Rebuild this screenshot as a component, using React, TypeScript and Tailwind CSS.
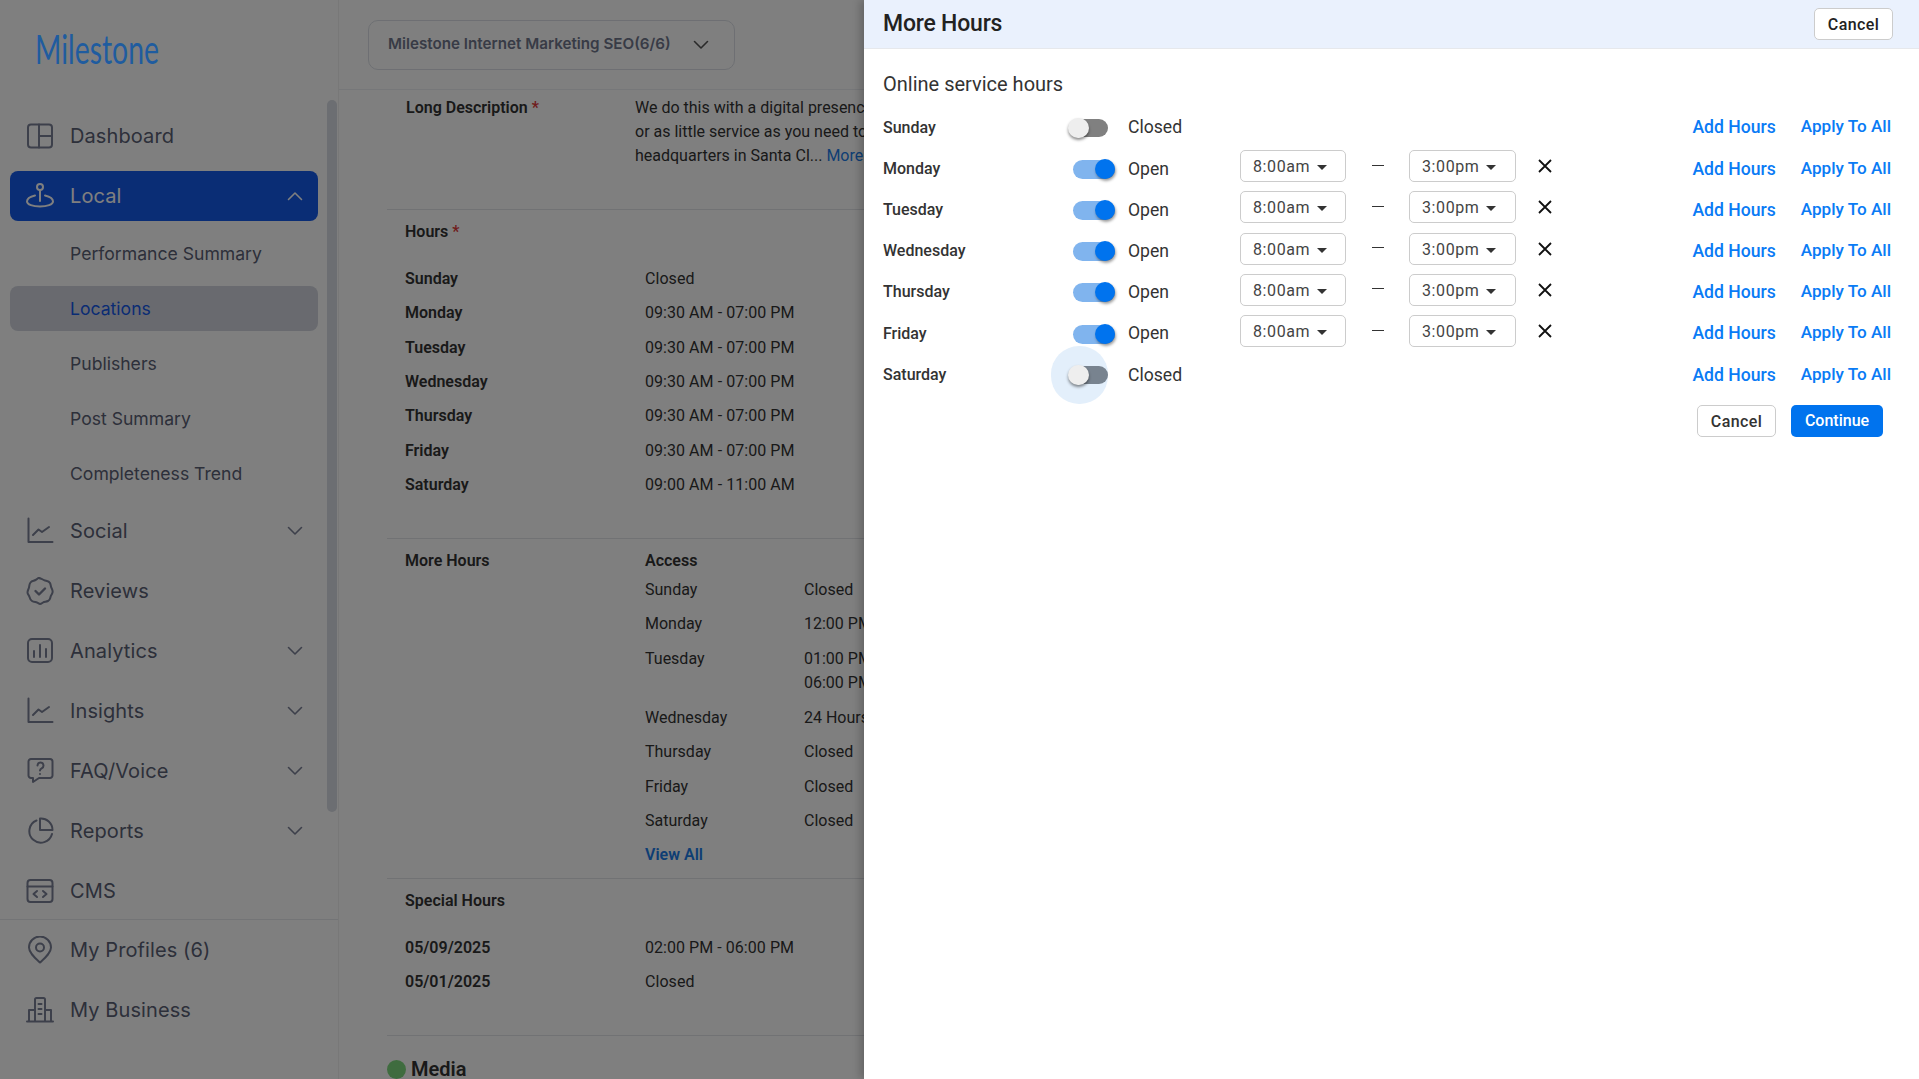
import React from "react";

const roboto = "font-['Roboto',sans-serif]";

function Ico({ children }: { children: React.ReactNode }) {
  return (
    <svg viewBox="0 0 28 28" className="w-[28px] h-[28px] shrink-0" fill="none" stroke="currentColor" strokeWidth="2" strokeLinecap="round" strokeLinejoin="round">
      {children}
    </svg>
  );
}

const icons: Record<string, React.ReactNode> = {
  dashboard: <><rect x="2" y="2.5" width="24" height="23" rx="3" /><path d="M13 2.5v23M13 14h13" /></>,
  local: <><circle cx="14" cy="5" r="3" /><path d="M14 8v11M9 13.500C4.500 14.500 1 16.500 1 19.500c0 3 6 5 13 5s13-2 13-5c0-3-3.500-5-8-6" /></>,
  chart: <><path d="M2.500 1.500v23.500h24" /><path d="M7 18l5.500-5.500 3.500 2.500 7-5" /></>,
  badge: <><path d="M14 1.500c2 0 3 1.500 5 2s4 .5 5 2.500 .5 3 1.500 5 1.500 2.500 1 4.500-1.500 2.500-2 4.500-.5 3-2.500 4-3.500 .5-5 1.500-2 1.500-3 1.500-1.500-1-3-1.500-3.500-.5-5-1.500-2-2-2.500-4-2-2.500-2-4.500 1-3 1.500-5 0-3 1.500-5 3-1.500 5-2.500 3-2.500 4-2.500z" /><path d="M9.500 14l3.500 3.500 6-6" strokeWidth="2.400" /></>,
  analytics: <><rect x="2" y="2" width="24" height="23" rx="4" /><path d="M8 20v-6M14 20V8M20 20v-8" /></>,
  faq: <><path d="M5 2h19a2.500 2.500 0 0 1 2.500 2.500v14A2.500 2.500 0 0 1 24 21H13l-6 4v-4H5a2.500 2.500 0 0 1-2.500-2.500v-14A2.500 2.500 0 0 1 5 2z" /><path d="M11.500 8.500a3 3 0 1 1 4.500 2.600c-1 .6-2 1.200-2 2.400M14 17v.1" /></>,
  reports: <><path d="M10.500 3.500A11.500 11.500 0 1 0 26 17" /><path d="M14 1.500A11.500 11.500 0 0 1 26.500 13H14z" /></>,
  cms: <><rect x="1.500" y="3" width="25" height="22" rx="3" /><path d="M1.500 9.500h25M11 14l-3.500 3 3.500 3M17 14l3.500 3-3.500 3" /></>,
  pin: <><path d="M14 26.500C9 22 3 17 3 11.500a11 11 0 0 1 22 0C25 17 19 22 14 26.500z" /><circle cx="14" cy="11.500" r="4" /></>,
  business: <><path d="M1 25.500h26M3 25.500V14h6M25 25.500V14h-6M9 25.500V3.500a1.500 1.500 0 0 1 1.500-1.500h7A1.500 1.500 0 0 1 19 3.500v22M12.500 8h3M12.500 13h3M12.500 18h3" /></>,
};

function Chevron({ up }: { up?: boolean }) {
  return (
    <svg viewBox="0 0 16 10" className="w-[16px] h-[10px]" fill="none" stroke="currentColor" strokeWidth="1.600" strokeLinecap="round" strokeLinejoin="round">
      <path d={up ? "M1.500 8.500L8 2l6.500 6.500" : "M1.500 1.500L8 8l6.500-6.500"} />
    </svg>
  );
}

function NavItem({ icon, label, chevron, active }: { icon: string; label: string; chevron?: boolean; active?: boolean }) {
  return (
    <div className="h-[60px] py-[5px] pl-[10px] w-[318px] shrink-0">
      <div className={`h-[50px] flex items-center rounded-[8px] pl-[16px] pr-[15px] ${active ? "bg-[#145aea] text-white" : "text-[#5a6075]"}`}>
        <span className={active ? "text-[#ffffff]" : "text-[#7a8096]"}><Ico>{icons[icon]}</Ico></span>
        <span className="ml-[16px] text-[20px] leading-[28px] tracking-[0.1px] flex-1">{label}</span>
        {chevron && <span className={active ? "text-white" : "text-[#7a8096]"}><Chevron up={active} /></span>}
      </div>
    </div>
  );
}

function SubItem({ label, active }: { label: string; active?: boolean }) {
  return (
    <div className="h-[55px] pl-[10px] w-[318px] flex items-center">
      <div className={`w-full h-[45px] rounded-[8px] flex items-center pl-[60px] pt-[1px] text-[17.6px] ${active ? "bg-[#d2d5de] text-[#1558e8]" : "text-[#5a6075]"}`}>{label}</div>
    </div>
  );
}

function Sidebar() {
  return (
    <aside className="w-[339px] h-full shrink-0 border-r border-[#f0f0f0] bg-white font-['Inter',sans-serif] flex flex-col relative">
      <div className="h-[106px]" />
      <NavItem icon="dashboard" label="Dashboard" />
      <NavItem icon="local" label="Local" chevron active />
      <SubItem label="Performance Summary" />
      <SubItem label="Locations" active />
      <SubItem label="Publishers" />
      <SubItem label="Post Summary" />
      <SubItem label="Completeness Trend" />
      <NavItem icon="chart" label="Social" chevron />
      <NavItem icon="badge" label="Reviews" />
      <NavItem icon="analytics" label="Analytics" chevron />
      <NavItem icon="chart" label="Insights" chevron />
      <NavItem icon="faq" label="FAQ/Voice" chevron />
      <NavItem icon="reports" label="Reports" chevron />
      <div className="h-[58px]"><NavItem icon="cms" label="CMS" /></div>
      <div className="border-t border-[#e6e8ec]">
        <NavItem icon="pin" label="My Profiles (6)" />
        <NavItem icon="business" label="My Business" />
      </div>
      <div className="absolute left-[327px] top-[100px] w-[10px] h-[712px] rounded-full bg-[#d8dce4]" />
    </aside>
  );
}

function Row({ a, b }: { a: string; b: string }) {
  return (
    <div className="flex h-[34.3px] items-center">
      <div className="w-[240px] font-semibold">{a}</div>
      <div className="whitespace-nowrap tracking-[0.05px]">{b}</div>
    </div>
  );
}

function AccessRow({ a, b, c }: { a: string; b: string; c?: string }) {
  return (
    <div className={`flex leading-[24px] pt-[5.15px] ${c ? "pb-[6.15px]" : "pb-[5.15px]"}`}>
      <div className="w-[159px]">{a}</div>
      <div className="whitespace-nowrap">
        <div>{b}</div>
        {c && <div>{c}</div>}
      </div>
    </div>
  );
}

function Main() {
  return (
    <main className={`flex-1 min-w-0 h-full overflow-hidden bg-white text-[#333] text-[16px] ${roboto}`}>
      <div className="h-[90px] border-b border-[#eceef2] pl-[29px] pt-[20px] font-['Inter',sans-serif]">
        <div className="w-[367px] h-[50px] border border-[#dcdfe6] rounded-[10px] flex items-center pl-[19px] pr-[25px] justify-between text-[#70778c]">
          <span className="text-[15.2px] font-semibold whitespace-nowrap mb-[2px]">Milestone Internet Marketing SEO(6/6)</span>
          <span className="text-[#555]"><Chevron /></span>
        </div>
      </div>
      <div className="ml-[48px] w-[900px]">
        <div className="h-[120px] border-b border-[#e2e4e8] pl-[19px] pt-[6px] flex leading-[24px]">
          <div className="w-[229px] font-semibold">Long Description <span className="text-[#e03a3a]">*</span></div>
          <div className="whitespace-nowrap">
            <div>We do this with a digital presence that gives you as much service,</div>
            <div>or as little service as you need to thrive online from our</div>
            <div>headquarters in Santa Cl... <span className="text-[#1c7ce8]">More</span></div>
          </div>
        </div>
        <div className="h-[329px] border-b border-[#e2e4e8] pl-[18px]">
          <div className="h-[43px] flex items-center font-semibold">Hours&nbsp;<span className="text-[#e03a3a]">*</span></div>
          <div className="mt-[9px]">
            <Row a="Sunday" b="Closed" />
            <Row a="Monday" b="09:30 AM - 07:00 PM" />
            <Row a="Tuesday" b="09:30 AM - 07:00 PM" />
            <Row a="Wednesday" b="09:30 AM - 07:00 PM" />
            <Row a="Thursday" b="09:30 AM - 07:00 PM" />
            <Row a="Friday" b="09:30 AM - 07:00 PM" />
            <Row a="Saturday" b="09:00 AM - 11:00 AM" />
          </div>
        </div>
        <div className="h-[340px] border-b border-[#e2e4e8] pl-[18px] flex pt-[10px]">
          <div className="w-[240px] font-semibold leading-[24px]">More Hours</div>
          <div>
            <div className="font-semibold leading-[24px]">Access</div>
            <AccessRow a="Sunday" b="Closed" />
            <AccessRow a="Monday" b="12:00 PM - 07:00 PM" />
            <AccessRow a="Tuesday" b="01:00 PM - 03:00 PM" c="06:00 PM - 07:00 PM" />
            <AccessRow a="Wednesday" b="24 Hours" />
            <AccessRow a="Thursday" b="Closed" />
            <AccessRow a="Friday" b="Closed" />
            <AccessRow a="Saturday" b="Closed" />
            <div className="py-[5px] leading-[24px] font-semibold text-[#1c7ce8]">View All</div>
          </div>
        </div>
        <div className="h-[157px] border-b border-[#e2e4e8] pl-[18px]">
          <div className="h-[44px] flex items-center font-semibold">Special Hours</div>
          <div className="mt-[8px]">
            <Row a="05/09/2025" b="02:00 PM - 06:00 PM" />
            <Row a="05/01/2025" b="Closed" />
          </div>
        </div>
        <div className="flex items-start mt-[21px] leading-[24px]">
          <div className="w-[19px] h-[19px] rounded-full bg-[#7fd97f] mt-[3px]" />
          <div className="ml-[5px] text-[20px] font-semibold text-[#333]">Media</div>
        </div>
      </div>
    </main>
  );
}

function Toggle({ on, halo, slate }: { on?: boolean; halo?: boolean; slate?: boolean }) {
  return (
    <div className="relative w-[60px] h-[20px] shrink-0">
      {halo && <div className="absolute left-[-17px] top-[-19px] w-[57px] h-[58px] rounded-[28px] bg-[#e3effb]" />}
      {on ? (
        <>
          <div className="absolute left-[5px] top-[1px] w-[42px] h-[19px] rounded-full bg-[#80b4ee]" />
          <div className="absolute left-[27px] top-[0px] w-[20px] h-[20px] rounded-full bg-[#0073ee] shadow-[1px_2px_3px_rgba(0,0,0,0.4)]" />
        </>
      ) : (
        <>
          <div className={`absolute left-[3px] top-[1px] w-[37px] h-[18px] rounded-full ${slate ? "bg-[#78838f]" : "bg-[#808080]"}`} />
          <div className="absolute left-[0px] top-[0px] w-[21px] h-[20px] rounded-full bg-[#eeeeee] shadow-[0px_2px_3px_rgba(0,0,0,0.45)]" />
        </>
      )}
    </div>
  );
}

function TimeSelect({ value, w }: { value: string; w: string }) {
  return (
    <div className={`${w} h-[32px] mb-[5px] border border-[#cccccc] rounded-[5px] flex items-center pl-[12px] text-[#444] tracking-[0.6px] shrink-0`}>
      <span className="pt-[2px]">{value}</span>
      <svg viewBox="0 0 10 5" className="w-[10px] h-[5px] ml-[7px] mt-[3px]"><path d="M0 0h10L5 5z" fill="#333" /></svg>
    </div>
  );
}

function DayRow({ day, on, halo }: { day: string; on?: boolean; halo?: boolean }) {
  return (
    <div className="h-[41.2px] flex items-center text-[17.6px]">
      <div className="w-[185px] shrink-0 text-[16px] font-medium text-[#333]">{day}</div>
      <Toggle on={on} halo={halo} slate={halo} />
      <div className="w-[112px] shrink-0 text-[#333]">{on ? "Open" : "Closed"}</div>
      {on && (
        <div className="flex items-center text-[16px]">
          <TimeSelect value="8:00am" w="w-[106px]" />
          <div className="w-[63px] shrink-0 flex justify-center mb-[7px]"><div className="w-[12px] h-[1px] bg-[#333]" /></div>
          <TimeSelect value="3:00pm" w="w-[107px]" />
          <svg viewBox="0 0 14 14" className="w-[14px] h-[14px] ml-[22px] mb-[5px]" stroke="#111" strokeWidth="1.800"><path d="M1 1l12 12M13 1L1 13" /></svg>
        </div>
      )}
      <div className="ml-auto flex gap-[25px] text-[#0a7bf5] font-medium whitespace-nowrap">
        <span>Add Hours</span>
        <span className="text-[17.1px]">Apply To All</span>
      </div>
    </div>
  );
}

function Modal() {
  return (
    <div className={`absolute right-0 top-0 bottom-0 w-[1055px] bg-white shadow-[-4px_0_8px_rgba(0,0,0,0.2)] ${roboto}`}>
      <div className="h-[49px] bg-[#eaf1fd] border-b border-[#e6e8ec] flex items-center justify-between pl-[19px] pr-[26px]">
        <div className="text-[23px] leading-[28px] font-medium text-[#222] tracking-[-0.2px]">More Hours</div>
        <button className="w-[79px] h-[32px] pt-[2px] bg-white border border-[#cccccc] rounded-[5px] text-[16px] font-medium text-[#222] tracking-[0.4px]">Cancel</button>
      </div>
      <div className="pl-[19px] pr-[28px]">
        <div className="h-[58px] pt-[22px] text-[20px] leading-[26px] text-[#333]">Online service hours</div>
        <DayRow day="Sunday" />
        <DayRow day="Monday" on />
        <DayRow day="Tuesday" on />
        <DayRow day="Wednesday" on />
        <DayRow day="Thursday" on />
        <DayRow day="Friday" on />
        <DayRow day="Saturday" halo />
        <div className="flex justify-end gap-[15px] mt-[10px] pr-[8px]">
          <button className="w-[79px] h-[32px] pt-[1px] bg-white border border-[#cccccc] rounded-[5px] text-[16px] font-medium text-[#333] tracking-[0.4px]">Cancel</button>
          <button className="w-[92px] h-[32px] bg-[#0073ee] rounded-[5px] text-[16px] font-medium text-white">Continue</button>
        </div>
      </div>
    </div>
  );
}

export default function App() {
  return (
    <div className="relative w-full h-screen overflow-hidden bg-white flex">
      <Sidebar />
      <Main />
      <div className="absolute inset-0 bg-black/50" />
      <div className="absolute left-[35px] top-[24px] origin-left scale-x-[0.71] text-[40px] leading-[50px] text-[#1f5c9f] font-['Lato',sans-serif] whitespace-nowrap">Milestone</div>
      <Modal />
    </div>
  );
}
